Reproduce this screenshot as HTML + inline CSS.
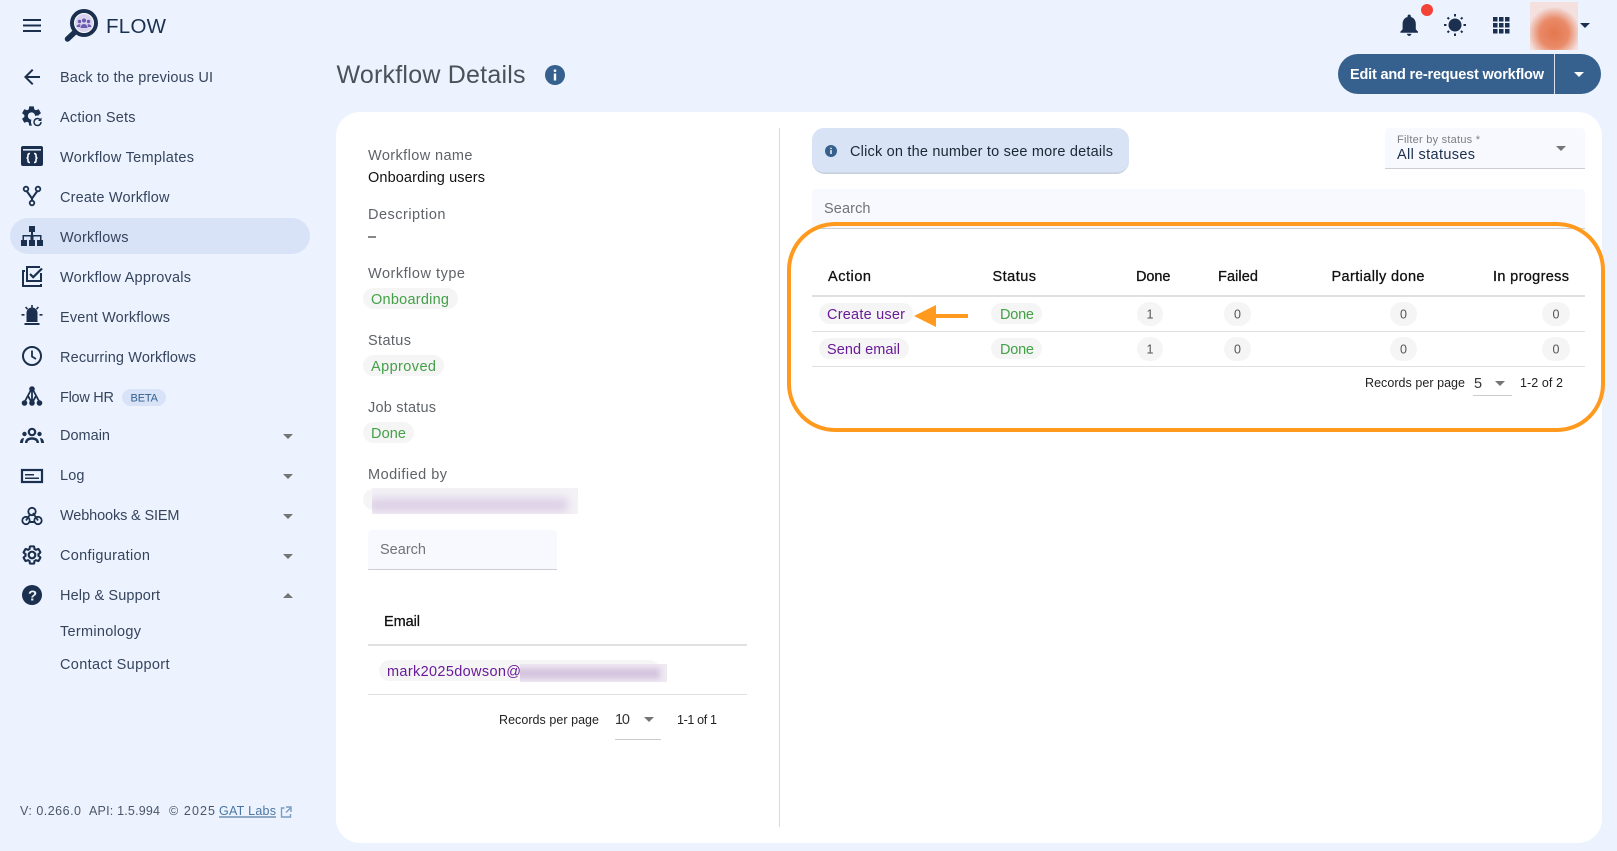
<!DOCTYPE html>
<html lang="en"><head><meta charset="utf-8"><title>Workflow Details</title>
<style>
html,body{margin:0;padding:0;background:#ecf3ff;width:1617px;height:851px;overflow:hidden}
svg{display:block}
text{font-family:"Liberation Sans",sans-serif;white-space:pre}
.n{font-size:14.5px;fill:#35445c}
.l{font-size:14.5px;fill:#5f6368}
.v{font-size:14.5px;fill:#111}
.h{font-size:14.5px;fill:#111;font-weight:400;stroke:#111;stroke-width:.3px}
.g{font-size:14.5px;fill:#43a047}
.p{font-size:14.5px;fill:#6a1b9a}
.s{font-size:14.5px;fill:#6f7479}
.r{font-size:12.5px;fill:#222}
.f{font-size:12.5px;fill:#4a566a}
.i{fill:#1b2f4e}
</style></head><body>
<svg width="1617" height="851" viewBox="0 0 1617 851" xmlns="http://www.w3.org/2000/svg">
<defs>
<filter id="b4" x="-20%" y="-80%" width="140%" height="260%"><feGaussianBlur stdDeviation="5"/></filter>
<filter id="b2" x="-20%" y="-80%" width="140%" height="260%"><feGaussianBlur stdDeviation="3"/></filter>
<clipPath id="c1"><rect x="372" y="488" width="206" height="26"/></clipPath>
<clipPath id="c2"><rect x="520" y="664" width="147" height="18"/></clipPath>
<radialGradient id="av" cx="50%" cy="65%" r="55%"><stop offset="0" stop-color="#e4774e"/><stop offset=".55" stop-color="#e98a68"/><stop offset="1" stop-color="#f3e0df"/></radialGradient>
</defs>
<rect width="1617" height="851" fill="#ecf3ff"/>

<!-- top bar -->
<path class="i" d="M23 19h18v2H23zM23 24.500h18v2H23zM23 30h18v2H23z"/>
<circle cx="84" cy="23" r="12" fill="#fff" stroke="#1b2f4e" stroke-width="4"/>
<path d="M75 32L67.500 39" stroke="#1b2f4e" stroke-width="5.500" stroke-linecap="round"/>
<circle cx="84" cy="23" r="9" fill="#d9d3ee"/>
<g fill="#6a5cb0"><circle cx="84" cy="20.500" r="2"/><circle cx="79.500" cy="21.500" r="1.700"/><circle cx="88.500" cy="21.500" r="1.700"/><path d="M80.500 28a3.500 4 0 0 1 7 0zM76.500 27a3 3 0 0 1 4-2.500l-.5 2.500zM91.500 27a3 3 0 0 0-4-2.500l.5 2.500z"/></g>
<text x="106" y="33" textLength="60" style="font-size:20.500px;fill:#1b2f4e">FLOW</text>

<path class="i" transform="translate(1396,11.800) scale(1.100)" d="M12 22c1.100 0 2-.9 2-2h-4c0 1.100.89 2 2 2zm6-6v-5c0-3.070-1.640-5.640-4.500-6.320V4c0-.83-.67-1.500-1.500-1.500s-1.500.67-1.500 1.500v.68C7.630 5.360 6 7.920 6 11v5l-2 2v1h16v-1l-2-2z"/>
<circle cx="1427" cy="10" r="6" fill="#f44336"/>
<circle cx="1455" cy="25" r="6.500" class="i"/>
<path d="M1455 14v2.500M1455 33.500v2.500M1444 25h2.500M1463.500 25h2.500M1447.500 17.500l1.600 1.600M1460.900 30.900l1.600 1.600M1462.500 17.500l-1.600 1.600M1449.100 30.900l-1.600 1.600" stroke="#1b2f4e" stroke-width="2"/>
<path class="i" d="M1493 17h4.500v4.500H1493zM1499 17h4.500v4.500H1499zM1505 17h4.500v4.500H1505zM1493 23h4.500v4.500H1493zM1499 23h4.500v4.500H1499zM1505 23h4.500v4.500H1505zM1493 29h4.500v4.500H1493zM1499 29h4.500v4.500H1499zM1505 29h4.500v4.500H1505z"/>
<rect x="1530" y="2" width="48" height="48" fill="url(#av)"/>
<path class="i" d="M1580 23h10l-5 5z"/>

<!-- sidebar -->
<rect x="10" y="218" width="300" height="36" rx="18" fill="#d8e3f8"/>
<path class="i" transform="translate(20,65)" d="M20 11H7.830l5.590-5.590L12 4l-8 8 8 8 1.410-1.410L7.830 13H20v-2z"/>
<text class="n" x="60" y="82" textLength="153">Back to the previous UI</text>

<path class="i" transform="translate(19.500,104)" d="M19.140 12.940c.04-.3.06-.61.06-.94 0-.32-.02-.64-.07-.94l2.030-1.580c.18-.14.23-.41.12-.61l-1.920-3.320c-.12-.22-.37-.29-.59-.22l-2.390.96c-.5-.38-1.030-.7-1.620-.94l-.36-2.540c-.04-.24-.24-.41-.48-.41h-3.840c-.24 0-.43.17-.47.41l-.36 2.540c-.59.24-1.130.57-1.620.94l-2.390-.96c-.22-.08-.47 0-.59.22L2.740 8.870c-.12.21-.08.47.12.61l2.030 1.580c-.05.3-.09.63-.09.94s.02.64.07.94l-2.030 1.580c-.18.14-.23.41-.12.61l1.920 3.320c.12.22.37.29.59.22l2.390-.96c.5.38 1.030.7 1.620.94l.36 2.540c.05.24.24.41.48.41h3.840c.24 0 .44-.17.47-.41l.36-2.540c.59-.24 1.130-.56 1.620-.94l2.390.96c.22.08.47 0 .59-.22l1.920-3.320c.12-.22.07-.47-.12-.61l-2.010-1.580zM12 15.600c-1.980 0-3.600-1.620-3.600-3.600s1.620-3.600 3.600-3.600 3.600 1.620 3.600 3.600-1.620 3.600-3.600 3.600z"/>
<circle cx="37.500" cy="122" r="6.500" fill="#ecf3ff"/>
<path d="M41 122a3.500 3.500 0 1 1-1.200-2.600" fill="none" stroke="#1b2f4e" stroke-width="1.500"/><path class="i" d="M41.500 117.500v3.500h-3.500z"/>
<text class="n" x="60" y="122" textLength="75.500">Action Sets</text>

<rect x="21" y="146" width="22" height="20" rx="2" class="i"/>
<rect x="23" y="149" width="18" height="1.600" fill="#dfe7f5"/>
<path d="M30 153.500c-1.600 0-2 .7-2 1.600v1.300c0 1-.7 1.600-1.500 1.600.8 0 1.500.6 1.500 1.600v1.300c0 .9.4 1.600 2 1.600M34 153.500c1.600 0 2 .7 2 1.600v1.300c0 1 .7 1.600 1.500 1.600-.8 0-1.500.6-1.500 1.600v1.300c0 .9-.4 1.600-2 1.600" fill="none" stroke="#fff" stroke-width="1.600"/>
<text class="n" x="60" y="162" textLength="134">Workflow Templates</text>

<path d="M26 190l6 8.500 6-8.500M32 198.500v4" stroke="#1b2f4e" stroke-width="2" fill="none"/>
<circle cx="26" cy="189" r="2.300" fill="#ecf3ff" stroke="#1b2f4e" stroke-width="1.800"/><circle cx="38" cy="189" r="2.300" fill="#ecf3ff" stroke="#1b2f4e" stroke-width="1.800"/><circle cx="32" cy="203" r="2.300" fill="#ecf3ff" stroke="#1b2f4e" stroke-width="1.800"/>
<text class="n" x="60" y="202" textLength="109.500">Create Workflow</text>

<path class="i" d="M29 226h6v6h-2v3h8.500v5h1.500v6H37v-6h3v-3.500h-6.500v3.500H35v6h-6v-6h1.500v-3.500H24v3.500h3v6H21v-6h1.500v-5H31v-3h-2z"/>
<text class="n" x="60" y="242" textLength="68.500">Workflows</text>

<path d="M25 271h-2v15h18v-2" fill="none" stroke="#1b2f4e" stroke-width="2"/>
<path d="M40 267H27v14h14v-8" fill="none" stroke="#1b2f4e" stroke-width="2"/>
<path d="M30 274l3.200 3.200L42 268.500" fill="none" stroke="#1b2f4e" stroke-width="2.200"/>
<text class="n" x="60" y="282" textLength="131">Workflow Approvals</text>

<path class="i" d="M26.500 322v-9a5.500 5.500 0 0 1 11 0v9zM24.500 323h15v2h-15zM31.200 305h1.600v3h-1.600zM25 307.500l1.200-1 2 2.300-1.200 1zM39 307.500l-1.200-1-2 2.300 1.200 1zM21.500 314h3v1.600h-3zM39.500 314h3v1.600h-3z"/>
<text class="n" x="60" y="322" textLength="110">Event Workflows</text>

<circle cx="32" cy="356" r="9" fill="none" stroke="#1b2f4e" stroke-width="2"/>
<path d="M32 350.500v6l4 2.500" fill="none" stroke="#1b2f4e" stroke-width="1.800"/>
<text class="n" x="60" y="362" textLength="136">Recurring Workflows</text>

<path d="M32 388l-8 15M32 388v15M32 388l8 15M28 396l4 7M36 396l-4 7" stroke="#1b2f4e" stroke-width="1.800" fill="none"/>
<circle cx="32" cy="389" r="2.800" class="i"/><circle cx="24.500" cy="403" r="2.800" class="i"/><circle cx="32" cy="403" r="2.800" class="i"/><circle cx="39.500" cy="403" r="2.800" class="i"/>
<text class="n" x="60" y="402" textLength="54">Flow HR</text>
<rect x="122" y="389" width="44" height="17" rx="8.500" fill="#d8e3f8"/>
<text x="130.500" y="401.500" textLength="27.500" style="font-size:11px;fill:#36608e">BETA</text>

<circle cx="32" cy="432" r="3.200" fill="none" stroke="#1b2f4e" stroke-width="2.200"/>
<circle cx="24.500" cy="434" r="2.200" class="i"/><circle cx="39.500" cy="434" r="2.200" class="i"/>
<path class="i" d="M25 443c0-4 3-5.800 7-5.800s7 1.800 7 5.800h-2.400c0-2.300-2-3.300-4.600-3.300s-4.600 1-4.600 3.300zM20 443c0-3 1.500-5 4-5l-1.200 5zM44 443c0-3-1.500-5-4-5l1.200 5z"/>
<text class="n" x="60" y="440" textLength="50">Domain</text>

<rect x="22" y="470" width="20" height="12" fill="none" stroke="#1b2f4e" stroke-width="2.200"/>
<path class="i" d="M25 474h9v1.500h-9zM25 477.500h14v1.500H25z"/>
<text class="n" x="60" y="480" textLength="24.500">Log</text>

<circle cx="32" cy="511.500" r="3.700" fill="none" stroke="#1b2f4e" stroke-width="1.800"/>
<circle cx="26" cy="520.500" r="3.700" fill="none" stroke="#1b2f4e" stroke-width="1.800"/>
<circle cx="38" cy="520.500" r="3.700" fill="none" stroke="#1b2f4e" stroke-width="1.800"/>
<path d="M30 514.500l-4 6M33 513l5 7.500M26 520.500" fill="none" stroke="#1b2f4e" stroke-width="1.800"/>
<path d="M29.500 522h5.500" fill="none" stroke="#1b2f4e" stroke-width="2"/>
<text class="n" x="60" y="520" textLength="119.500">Webhooks &amp; SIEM</text>

<g transform="translate(20,543)"><path d="M19.140 12.940c.04-.3.06-.61.06-.94 0-.32-.02-.64-.07-.94l2.030-1.580c.18-.14.23-.41.12-.61l-1.920-3.320c-.12-.22-.37-.29-.59-.22l-2.390.96c-.5-.38-1.030-.7-1.620-.94l-.36-2.540c-.04-.24-.24-.41-.48-.41h-3.840c-.24 0-.43.17-.47.41l-.36 2.540c-.59.24-1.130.57-1.620.94l-2.390-.96c-.22-.08-.47 0-.59.22L2.740 8.870c-.12.21-.08.47.12.61l2.030 1.580c-.05.3-.09.63-.09.94s.02.64.07.94l-2.030 1.580c-.18.14-.23.41-.12.61l1.920 3.320c.12.22.37.29.59.22l2.390-.96c.5.38 1.030.7 1.620.94l.36 2.540c.05.24.24.41.48.41h3.840c.24 0 .44-.17.47-.41l.36-2.540c.59-.24 1.130-.56 1.620-.94l2.390.96c.22.08.47 0 .59-.22l1.920-3.320c.12-.22.07-.47-.12-.61l-2.010-1.580z" fill="none" stroke="#1b2f4e" stroke-width="2.300" transform="translate(1.200,1.200) scale(.9)"/><circle cx="12" cy="12" r="3.300" fill="none" stroke="#1b2f4e" stroke-width="2.200"/></g>
<text class="n" x="60" y="560" textLength="90">Configuration</text>

<circle cx="32" cy="595" r="10" class="i"/>
<text x="28" y="600.500" textLength="8" style="font-size:15px;font-weight:700;fill:#ecf3ff">?</text>
<text class="n" x="60" y="600" textLength="100">Help &amp; Support</text>

<text class="n" x="60" y="636" textLength="81">Terminology</text>
<text class="n" x="60" y="669" textLength="109.500">Contact Support</text>

<g fill="#757575"><path d="M283 434h10l-5 5zM283 474h10l-5 5zM283 514h10l-5 5zM283 554h10l-5 5zM283 598h10l-5-5z"/></g>

<text class="f" x="20" y="815" textLength="61">V: 0.266.0</text>
<text class="f" x="89" y="815" textLength="71">API: 1.5.994</text>
<text class="f" x="169" y="815" textLength="46">© 2025</text>
<text x="219" y="815" textLength="57" style="font-size:12.500px;fill:#4a76a4">GAT Labs</text>
<rect x="219" y="816.500" width="57" height="1" fill="#36608e"/>
<path d="M284.500 808h-3v9h9v-3M286 807h5v5M291 807.500l-5 5" fill="none" stroke="#7a9cc0" stroke-width="1.400"/>

<!-- header -->
<text x="336.500" y="83" textLength="189" style="font-size:25px;fill:#4c5158">Workflow Details</text>
<circle cx="555" cy="75" r="10" fill="#36608e"/>
<path fill="#fff" d="M553.800 73.500h2.400v7h-2.400zM553.800 69.500h2.400v2.400h-2.400z"/>

<rect x="1338" y="54" width="263" height="40" rx="20" fill="#36608e"/>
<rect x="1554" y="54" width="1" height="40" fill="#d8e3f0"/>
<text x="1350" y="79" textLength="194" style="font-size:14.500px;font-weight:700;fill:#fff">Edit and re-request workflow</text>
<path fill="#fff" d="M1574 72h10l-5 5z"/>

<!-- card -->
<rect x="336" y="112" width="1266" height="731" rx="24" fill="#fff"/>
<rect x="779" y="128" width="1" height="699" fill="#d9d9d9"/>

<!-- left column -->
<text class="l" x="368" y="160" textLength="104.500">Workflow name</text>
<text class="v" x="368" y="182" textLength="117">Onboarding users</text>
<text class="l" x="368" y="219" textLength="77.500">Description</text>
<rect x="368" y="236.500" width="8" height="1" fill="#111"/>
<text class="l" x="368" y="278" textLength="97">Workflow type</text>
<rect x="363" y="288" width="95" height="21" rx="10.500" fill="#f5f5f5"/>
<text class="g" x="371" y="304" textLength="78">Onboarding</text>
<text class="l" x="368" y="345" textLength="43">Status</text>
<rect x="363" y="355" width="81" height="21" rx="10.500" fill="#f5f5f5"/>
<text class="g" x="371" y="371" textLength="65">Approved</text>
<text class="l" x="368" y="412" textLength="68">Job status</text>
<rect x="363" y="422" width="51" height="21" rx="10.500" fill="#f5f5f5"/>
<text class="g" x="371" y="438" textLength="35">Done</text>
<text class="l" x="368" y="479" textLength="79">Modified by</text>
<rect x="363" y="489" width="210" height="21" rx="10.500" fill="#f5f5f5"/>
<g clip-path="url(#c1)"><rect x="372" y="488" width="206" height="26" fill="#f4f2f6"/><rect x="368" y="498" width="200" height="14" fill="#dccfe6" filter="url(#b4)"/></g>

<rect x="368" y="530" width="189" height="40" rx="4" fill="#f7f9fe"/>
<rect x="368" y="569" width="189" height="1" fill="#ccced4"/>
<text class="s" x="380" y="554" textLength="46">Search</text>

<text class="h" x="384" y="626" textLength="36">Email</text>
<rect x="368" y="644" width="379" height="2" fill="#e0e0e0"/>
<rect x="379" y="660" width="281" height="21" rx="10.500" fill="#f5f5f5"/>
<text class="p" x="387" y="676" textLength="134">mark2025dowson@</text>
<g clip-path="url(#c2)"><rect x="520" y="664" width="147" height="18" fill="#efe9f2"/><rect x="515" y="668" width="145" height="11" fill="#d4c4de" filter="url(#b2)"/></g>
<rect x="368" y="694" width="379" height="1" fill="#e0e0e0"/>
<text class="r" x="499" y="724" textLength="100">Records per page</text>
<text x="615" y="724" textLength="15" style="font-size:14.500px;fill:#333">10</text>
<path fill="#757575" d="M644 717h10l-5 5z"/>
<rect x="615" y="739" width="46" height="1" fill="#ccc"/>
<text class="r" x="677" y="724" textLength="40">1-1 of 1</text>

<!-- right column -->
<rect x="812" y="129" width="317" height="45" rx="13" fill="#8e9db2" opacity=".5"/>
<rect x="812" y="128" width="317" height="44.500" rx="12" fill="#d8e3f6"/>
<circle cx="831" cy="151" r="6" fill="#36608e"/>
<path fill="#fff" d="M830.300 150h1.400v4h-1.400zM830.300 147.700h1.400v1.400h-1.400z"/>
<text x="850" y="156" textLength="263" style="font-size:14.500px;fill:#1c2733">Click on the number to see more details</text>

<path d="M1385 168v-36a4 4 0 0 1 4-4h192a4 4 0 0 1 4 4v36z" fill="#f7f9fe"/>
<rect x="1385" y="168" width="200" height="1" fill="#ccced4"/>
<text x="1397" y="143" textLength="83" style="font-size:11px;fill:#7a7f85">Filter by status *</text>
<text x="1397" y="159" textLength="78" style="font-size:14.500px;fill:#1b2f4e">All statuses</text>
<path fill="#757575" d="M1556 146h10l-5 5z"/>

<path d="M812 229v-36a4 4 0 0 1 4-4h765a4 4 0 0 1 4 4v36z" fill="#f7f9fe"/>
<rect x="812" y="228" width="773" height="1" fill="#ccced4"/>
<text class="s" x="824" y="213" textLength="46.500">Search</text>

<text class="h" x="828" y="281" textLength="43">Action</text>
<text class="h" x="992.500" y="281" textLength="43.500">Status</text>
<text class="h" x="1136" y="281" textLength="34.500">Done</text>
<text class="h" x="1218" y="281" textLength="40">Failed</text>
<text class="h" x="1331.500" y="281" textLength="93">Partially done</text>
<text class="h" x="1493" y="281" textLength="76">In progress</text>
<rect x="812" y="295" width="773" height="2" fill="#e0e0e0"/>
<rect x="812" y="331" width="773" height="1" fill="#e0e0e0"/>
<rect x="812" y="366" width="773" height="1" fill="#e0e0e0"/>

<rect x="819" y="303" width="94" height="21" rx="10.500" fill="#f5f5f5"/>
<text class="p" x="827" y="319" textLength="78">Create user</text>
<rect x="819" y="338" width="90" height="21" rx="10.500" fill="#f5f5f5"/>
<text class="p" x="827" y="354" textLength="73">Send email</text>
<rect x="991" y="303" width="51" height="21" rx="10.500" fill="#f5f5f5"/>
<text class="g" x="1000" y="319" textLength="34">Done</text>
<rect x="991" y="338" width="51" height="21" rx="10.500" fill="#f5f5f5"/>
<text class="g" x="1000" y="354" textLength="34">Done</text>

<g fill="#f5f5f5"><rect x="1137" y="302" width="26" height="24" rx="12"/><rect x="1224" y="302" width="27" height="24" rx="12"/><rect x="1390" y="302" width="27" height="24" rx="12"/><rect x="1542" y="302" width="28" height="24" rx="12"/><rect x="1137" y="337" width="26" height="24" rx="12"/><rect x="1224" y="337" width="27" height="24" rx="12"/><rect x="1390" y="337" width="27" height="24" rx="12"/><rect x="1542" y="337" width="28" height="24" rx="12"/></g>
<g text-anchor="middle" style="font-size:12.500px;fill:#555">
<text x="1150" y="318.500">1</text><text x="1237.500" y="318.500">0</text><text x="1403.500" y="318.500">0</text><text x="1556" y="318.500">0</text>
<text x="1150" y="353.500">1</text><text x="1237.500" y="353.500">0</text><text x="1403.500" y="353.500">0</text><text x="1556" y="353.500">0</text>
</g>

<text class="r" x="1365" y="387" textLength="100">Records per page</text>
<text x="1474" y="388" style="font-size:14.500px;fill:#333">5</text>
<path fill="#757575" d="M1495 381h10l-5 5z"/>
<rect x="1473" y="395" width="39" height="1" fill="#ccc"/>
<text class="r" x="1520" y="387" textLength="43">1-2 of 2</text>

<!-- annotation -->
<rect x="789" y="224" width="814" height="206" rx="46" fill="none" stroke="#ff9a1f" stroke-width="4"/>
<path fill="#ff9a1f" d="M914 316l22-11v9h32v4h-32v9z"/>
</svg>
</body></html>
